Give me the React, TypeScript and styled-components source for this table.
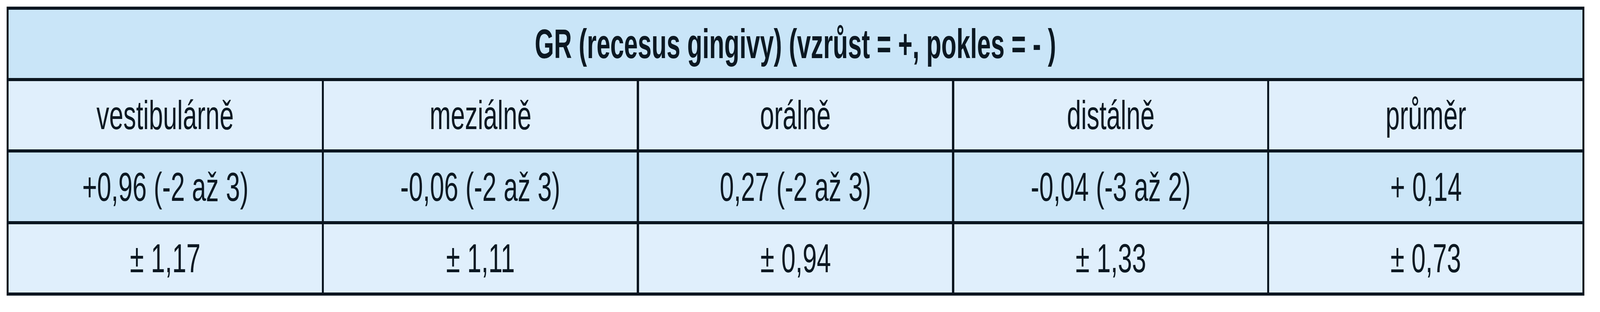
import React, { useEffect, useState } from "react"
import styled, { createGlobalStyle } from "styled-components"

// The reference is 6083px wide; horizontal sizes are kept as a share of the
// viewport so the table keeps its proportions in a narrower window.
const REF_WIDTH = 6083

const GlobalStyle = createGlobalStyle`
  html, body {
    margin: 0;
    padding: 0;
    background: #ffffff;
  }
  body {
    font-family: "Liberation Sans", Arial, sans-serif;
    color: #0c1822;
  }
`

const Page = styled.div`
  padding: 17px 0 0 0.41vw;
`

const Table = styled.div`
  display: grid;
  width: 98.62vw;
  grid-template-columns: repeat(5, 1fr);
  grid-template-rows: 175px 175px 176px 175px;
  row-gap: 8px;
  column-gap: 0.1315vw;
  padding: 8px 0.1315vw;
  box-sizing: border-box;
  background-color: #0b1620;
`

const Cell = styled.div<{ $tone: "header" | "light" | "mid" }>`
  display: flex;
  align-items: center;
  justify-content: center;
  overflow: hidden;
  grid-column: ${({ $tone }) => ($tone === "header" ? "1 / -1" : "auto")};
  background-color: ${({ $tone }) =>
    $tone === "header" ? "#c9e5f8" : $tone === "mid" ? "#cce6f8" : "#e0effc"};
`

const Label = styled.span<{ $bold?: boolean }>`
  display: inline-block;
  white-space: pre;
  line-height: 1;
  font-size: ${({ $bold }) => ($bold ? "105px" : "103px")};
  font-weight: ${({ $bold }) => ($bold ? 700 : 400)};
  transform: scaleX(calc(${({ $bold }) => ($bold ? 0.895 : 0.94)} * var(--fit, 1)));
`

const headings = ["vestibulárně", "meziálně", "orálně", "distálně", "průměr"]
const ranges = ["+0,96 (-2 až 3)", "-0,06 (-2 až 3)", "0,27 (-2 až 3)", "-0,04 (-3 až 2)", "+ 0,14"]
const deviations = ["± 1,17", "± 1,11", "± 0,94", "± 1,33", "± 0,73"]

const App = () => {
  const [vw, setVw] = useState(typeof window !== "undefined" ? window.innerWidth : REF_WIDTH)

  useEffect(() => {
    const onResize = () => setVw(window.innerWidth)
    window.addEventListener("resize", onResize)
    return () => window.removeEventListener("resize", onResize)
  }, [])

  const fit = Math.min(1, vw / REF_WIDTH)

  return (
    <Page style={{ ["--fit" as string]: fit } as React.CSSProperties}>
      <GlobalStyle />
      <Table>
        <Cell $tone="header">
          <Label $bold>GR (recesus gingivy) (vzrůst = +, pokles = - )</Label>
        </Cell>
        {headings.map((h) => (
          <Cell key={h} $tone="light">
            <Label>{h}</Label>
          </Cell>
        ))}
        {ranges.map((r) => (
          <Cell key={r} $tone="mid">
            <Label>{r}</Label>
          </Cell>
        ))}
        {deviations.map((d) => (
          <Cell key={d} $tone="light">
            <Label>{d}</Label>
          </Cell>
        ))}
      </Table>
    </Page>
  )
}

export default App
